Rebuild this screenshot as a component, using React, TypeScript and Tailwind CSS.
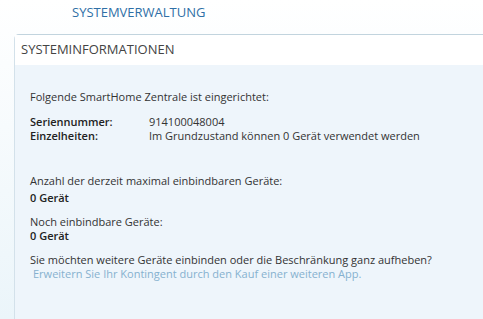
export default function App() {
  return (
    <div className="h-[319px] w-[483px] overflow-hidden bg-gradient-to-b from-white to-[#ebf5fa] font-['Open_Sans',sans-serif]">
      <div className="flex h-[34px] items-start pl-[72px] pt-[3px]">
        <span className="text-[13px] leading-[18px] text-[#2f6fa6]">SYSTEMVERWALTUNG</span>
      </div>
      <div className="ml-[14px] h-[285px] rounded-tl-[5px] border-l border-t border-l-[#d3e1ea] border-t-[#c2d4de] bg-[#eef5fb]">
        <div className="flex h-[30px] items-center bg-white pl-[6px] text-[13px] text-[#444]">
          SYSTEMINFORMATIONEN
        </div>
        <div className="pl-[15px] pt-[25px] text-[11px] leading-[14px] text-[#333]">
          <p>Folgende SmartHome Zentrale ist eingerichtet:</p>
          <div className="mt-[11px] grid grid-cols-[119px_1fr]">
            <span className="font-semibold text-[#222]">Seriennummer:</span>
            <span>914100048004</span>
            <span className="font-semibold text-[#222]">Einzelheiten:</span>
            <span>Im Grundzustand können 0 Gerät verwendet werden</span>
          </div>
          <p className="mt-[31px]">Anzahl der derzeit maximal einbindbaren Geräte:</p>
          <p className="mt-[3px] font-semibold text-[#222]">0 Gerät</p>
          <p className="mt-[10px]">Noch einbindbare Geräte:</p>
          <p className="font-semibold text-[#222]">0 Gerät</p>
          <p className="mt-[10px]">Sie möchten weitere Geräte einbinden oder die Beschränkung ganz aufheben?</p>
          <a className="block pl-[3px] text-[#86b1cf]">Erweitern Sie Ihr Kontingent durch den Kauf einer weiteren App.</a>
        </div>
      </div>
    </div>
  );
}
